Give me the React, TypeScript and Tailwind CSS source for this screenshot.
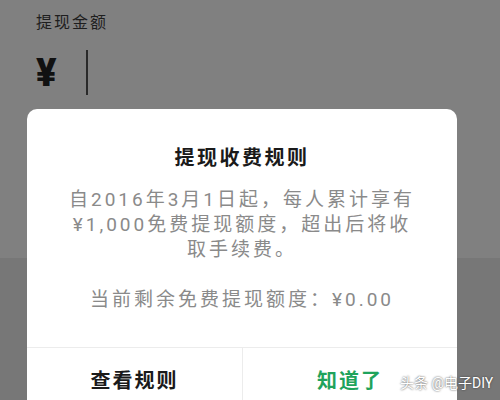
const font = { fontFamily: 'Roboto, "Noto Sans CJK SC", sans-serif' };

export default function App() {
  return (
    <div className="relative h-[400px] w-[500px] overflow-hidden bg-[#777777]" style={font}>
      {/* page under the scrim */}
      <div className="h-[258px] bg-[#808080] px-9 pt-[11px]">
        <p className="text-[16px] leading-6 tracking-[2px] text-[#1e1e1e]">提现金额</p>
        <div className="mt-[15px] flex items-center gap-[29px]">
          <span className="text-[38px] font-black leading-none text-[#111]">¥</span>
          <span className="h-[45px] w-[2px] bg-[#2a2a2a]" />
        </div>
      </div>

      {/* dialog */}
      <div className="absolute left-[27px] top-[109px] w-[430px] rounded-t-[10px] bg-white">
        <div className="px-6 pb-[35px] pt-[35px] text-center">
          <h2 className="text-[20px] font-bold leading-7 tracking-[2.5px] text-[#1a1a1a]">提现收费规则</h2>
          <p className="mx-auto mt-[15px] w-[360px] text-[19px] leading-[25px] tracking-[3px] text-[#8a8a8a]">
            自2016年3月1日起，每人累计享有¥1,000免费提现额度，超出后将收取手续费。
          </p>
          <p className="mt-[25px] text-[19px] leading-[25px] tracking-[3px] text-[#8a8a8a]">
            当前剩余免费提现额度：¥0.00
          </p>
        </div>
        <div className="grid h-[80px] grid-cols-2 border-t border-[#ececec]">
          <button className="pb-[14px] text-[20px] font-bold tracking-[2px] text-[#1a1a1a]">查看规则</button>
          <button className="border-l border-[#ececec] pb-[14px] text-[20px] font-bold tracking-[2px] text-[#1fa35c]">
            知道了
          </button>
        </div>
      </div>

      {/* watermark */}
      <span className="absolute left-[400px] top-[373px] whitespace-nowrap text-[14px] leading-5 text-white [text-shadow:0_0_2px_#333]">
        头条 @电子DIY
      </span>
    </div>
  );
}
